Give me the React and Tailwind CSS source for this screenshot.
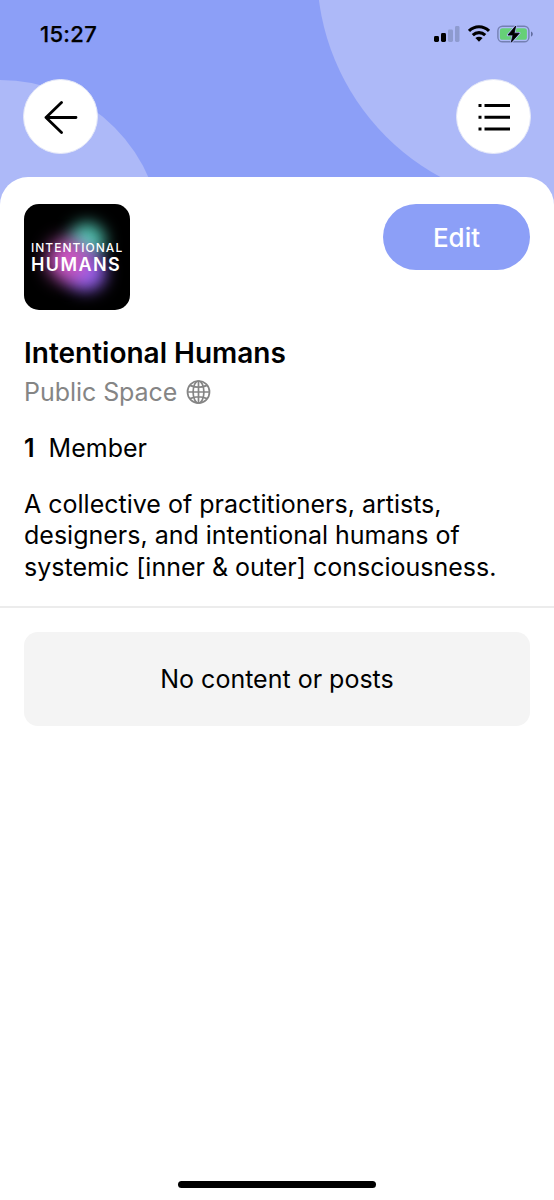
import React from 'react';

function StatusBar() {
  return (
    <div className="flex h-[68px] items-center justify-between pl-10 pr-[21px]">
      <span className="text-[22px] leading-6 font-medium tracking-[0.3px] [-webkit-text-stroke:0.25px_black]">15:27</span>
      <div className="flex items-center">
        <svg width="26" height="18" viewBox="0 0 26 18" className="mr-2">
          <rect x="0" y="11" width="5" height="6" rx="1.4" />
          <rect x="7" y="8" width="5" height="9" rx="1.4" />
          <rect x="14" y="4.5" width="5" height="12.5" rx="1.4" fill="#8e9bcf" />
          <rect x="21" y="1" width="4.5" height="16" rx="1.4" fill="#8e9bcf" />
        </svg>
        <svg width="22" height="18" viewBox="0 0 22 18" className="mr-[7px]">
          <g fill="none" stroke="#000" strokeWidth="3.1">
            <path d="M1 6C6.7.4 15.3.4 21 6" />
            <path d="M4.8 10.2c3.6-3.4 8.8-3.4 12.4 0" />
          </g>
          <path d="M7.4 13c2.1-1.8 5.1-1.8 7.2 0L11 16.8z" />
        </svg>
        <svg width="36" height="18" viewBox="0 0 36 18">
          <rect x="0.9" y="1.2" width="31" height="15.6" rx="4.6" fill="none" stroke="#7480b2" strokeWidth="1.4" />
          <rect x="2.9" y="3.2" width="27" height="11.6" rx="2.6" fill="#66d077" />
          <path d="M34 6.4c2.4.7 2.4 4.5 0 5.2z" fill="#626da0" />
          <path
            d="M18.7 1 11 10h5l-1.7 7.200L22.3 8.200h-5.200z"
            stroke="#adb9f8"
            strokeWidth="2.4"
            strokeLinejoin="round"
          />
          <path d="M18.7 1 11 10h5l-1.7 7.200L22.3 8.200h-5.200z" stroke="#000" strokeWidth="0.8" />
        </svg>
      </div>
    </div>
  );
}

function RoundButton({ label, children }) {
  return (
    <button
      type="button"
      aria-label={label}
      className="flex h-[75px] w-[75px] items-center justify-center rounded-full border border-[#e3e7f8] bg-white"
    >
      {children}
    </button>
  );
}

function SpaceLogo() {
  return (
    <div className="relative isolate h-[106px] w-[106px] overflow-hidden rounded-[15px] bg-black text-white">
      <div className="absolute top-[19px] left-[45px] h-9 w-9 rounded-full bg-[#4fc4b0] blur-[8px]" />
      <div className="absolute top-[49px] left-[42px] h-[38px] w-10 rounded-full bg-[#8f5fe8] blur-[8px]" />
      <div className="absolute top-[35px] left-[23px] h-[42px] w-[42px] rounded-full bg-[#cf58c4] blur-[9px]" />
      <div className="relative flex flex-col pt-[38px] pl-[7px] whitespace-nowrap">
        <span className="text-[12px] leading-[12px] font-medium tracking-[1px]">INTENTIONAL</span>
        <span className="mt-0.5 text-[18px] leading-[18px] font-semibold tracking-[1.4px]">HUMANS</span>
      </div>
    </div>
  );
}

function GlobeIcon() {
  return (
    <svg width="25" height="25" viewBox="0 0 25 25" fill="none" stroke="#858585" strokeWidth="1.7">
      <circle cx="12.5" cy="12" r="11" />
      <ellipse cx="12.5" cy="12" rx="5.4" ry="11" />
      <path d="M12.5 1v22M1.5 12h22M4 5.4c5 2.2 12 2.2 17 0M4 18.6c5-2.2 12-2.2 17 0" />
    </svg>
  );
}

export default function App() {
  return (
    <div className="relative flex h-[1200px] w-[554px] flex-col overflow-hidden bg-[#8c9ff7] font-['Inter',sans-serif] text-black">
      <svg className="absolute top-0 left-0" width="554" height="220" viewBox="0 0 554 220" fill="#adb9f8">
        <circle cx="0" cy="242" r="162" />
        <circle cx="552.5" cy="-30" r="235.5" />
      </svg>

      <header className="relative h-[177px] shrink-0">
        <StatusBar />
        <div className="flex justify-between px-[23px] pt-[11px]">
          <RoundButton label="Back">
            <svg width="34" height="34" viewBox="0 0 34 34" fill="none" stroke="#000" strokeWidth="2.8" strokeLinecap="round" strokeLinejoin="round">
              <path d="M32 17.5H2M17.5 2.5 2 17.5l15.5 15" />
            </svg>
          </RoundButton>
          <RoundButton label="Menu">
            <svg width="34" height="34" viewBox="0 0 34 34" stroke="#000" strokeWidth="3">
              <path d="M1.5 5.5h3M7.5 5.5h25.5M1.5 17.3h3M7.5 17.3h25.5M1.5 29.1h3M7.5 29.1h25.5" />
            </svg>
          </RoundButton>
        </div>
      </header>

      <main className="relative flex flex-1 flex-col rounded-t-[28px] bg-white">
        <section className="flex h-[431px] flex-col border-b-2 border-[#ececec] px-6 pt-[27px]">
          <div className="flex items-start justify-between">
            <SpaceLogo />
            <button type="button" className="h-[66px] w-[147px] rounded-full bg-[#8c9ff7] text-[26px] font-medium text-white">
              Edit
            </button>
          </div>

          <h1 className="mt-[25px] text-[28px] leading-9 font-semibold">Intentional Humans</h1>
          <div className="mt-[3px] flex items-center gap-[9px] text-[25px] leading-9 tracking-[-0.05px] text-[#858585]">
            <span>Public Space</span>
            <GlobeIcon />
          </div>

          <p className="mt-5 flex gap-[14px] text-[25px] leading-9">
            <span className="font-semibold">1</span>
            <span>Member</span>
          </p>

          <p className="mt-[22.5px] text-[25px] leading-[31.5px] whitespace-nowrap">
            A collective of practitioners, artists,
            <br />
            designers, and intentional humans of
            <br />
            systemic [inner &amp; outer] consciousness.
          </p>
        </section>

        <section className="px-6 pt-6">
          <div className="flex h-[94px] items-center justify-center rounded-[14px] bg-[#f4f4f4] pt-0.5 text-[25px]">
            No content or posts
          </div>
        </section>

        <div className="mt-auto mb-3 h-[7px] w-[198px] self-center rounded-full bg-black" />
      </main>
    </div>
  );
}
